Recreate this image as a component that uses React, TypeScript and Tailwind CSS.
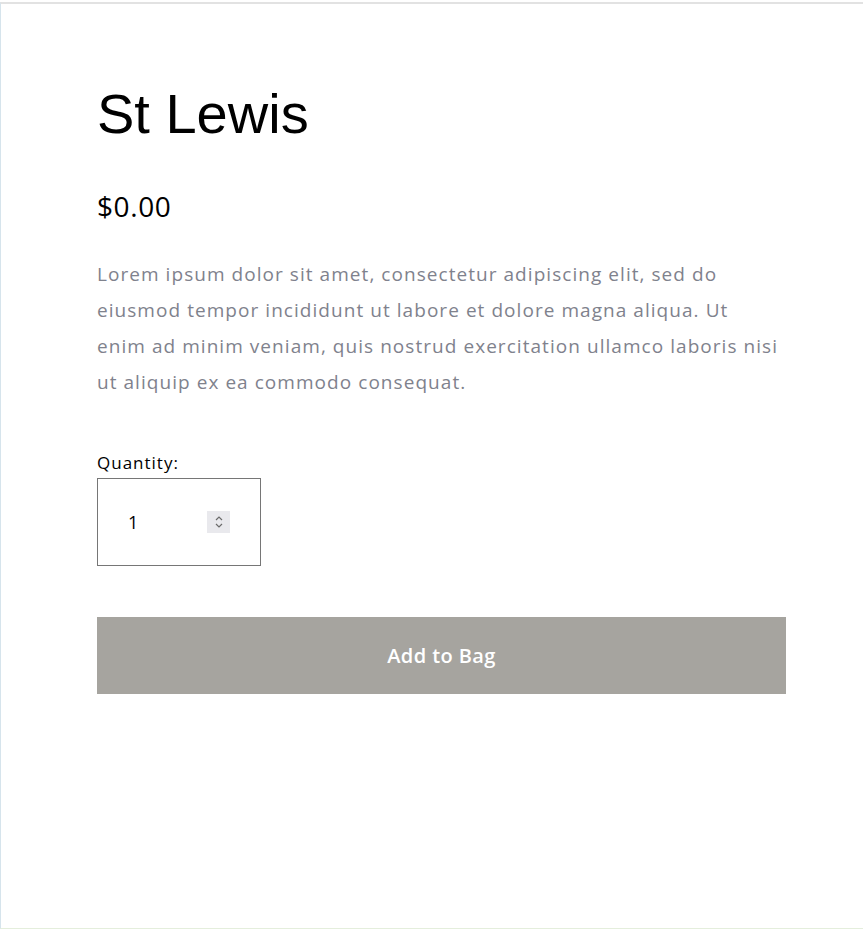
import React from 'react';

export default function App() {
  return (
    <div className="bg-white w-[863px] h-[929px] pt-[2px]">
      <div className="h-[927px] border-t-2 border-t-[#e2e2e2] border-l border-l-[#d6e4ec] border-b border-b-[#e4eedc] bg-white">
        <div className="pl-[96px] pr-[77px] pt-[70px] font-['Open_Sans',sans-serif]">
          <h1 className="font-['Liberation_Sans',Arial,sans-serif] text-[56px] leading-[80px] text-black">St Lewis</h1>
          <p className="mt-[32px] text-[28px] leading-[40px] text-black tracking-[0.6px]">$0.00</p>
          <p className="mt-[30px] w-[683px] text-[19px] leading-[36px] text-[#7f828d] tracking-[1.05px]">
            Lorem ipsum dolor sit amet, consectetur adipiscing elit, sed do eiusmod tempor incididunt ut labore et dolore magna aliqua. Ut enim ad minim veniam, quis nostrud exercitation ullamco laboris nisi ut aliquip ex ea commodo consequat.
          </p>
          <label className="block mt-[51px] text-[17px] leading-[24px] text-black tracking-[1px]">Quantity:</label>
          <div className="mt-[3px] w-[164px] h-[88px] border border-[#767676] flex items-center pl-[30px] pr-[30px]">
            <span className="flex-1 text-[18px] text-black">1</span>
            <span className="w-[23px] h-[22px] bg-[#e9e9ed] flex items-center justify-center">
              <svg width="10" height="16" viewBox="0 0 10 16" fill="none" stroke="#6b6b6b" strokeWidth="1.2">
                <path d="M2 6l3-3 3 3" />
                <path d="M2 10l3 3 3-3" />
              </svg>
            </span>
          </div>
          <button className="mt-[51px] w-[689px] h-[77px] bg-[#a6a49f] text-white text-[20px] font-semibold tracking-[0.4px]">
            Add to Bag
          </button>
        </div>
      </div>
    </div>
  );
}
